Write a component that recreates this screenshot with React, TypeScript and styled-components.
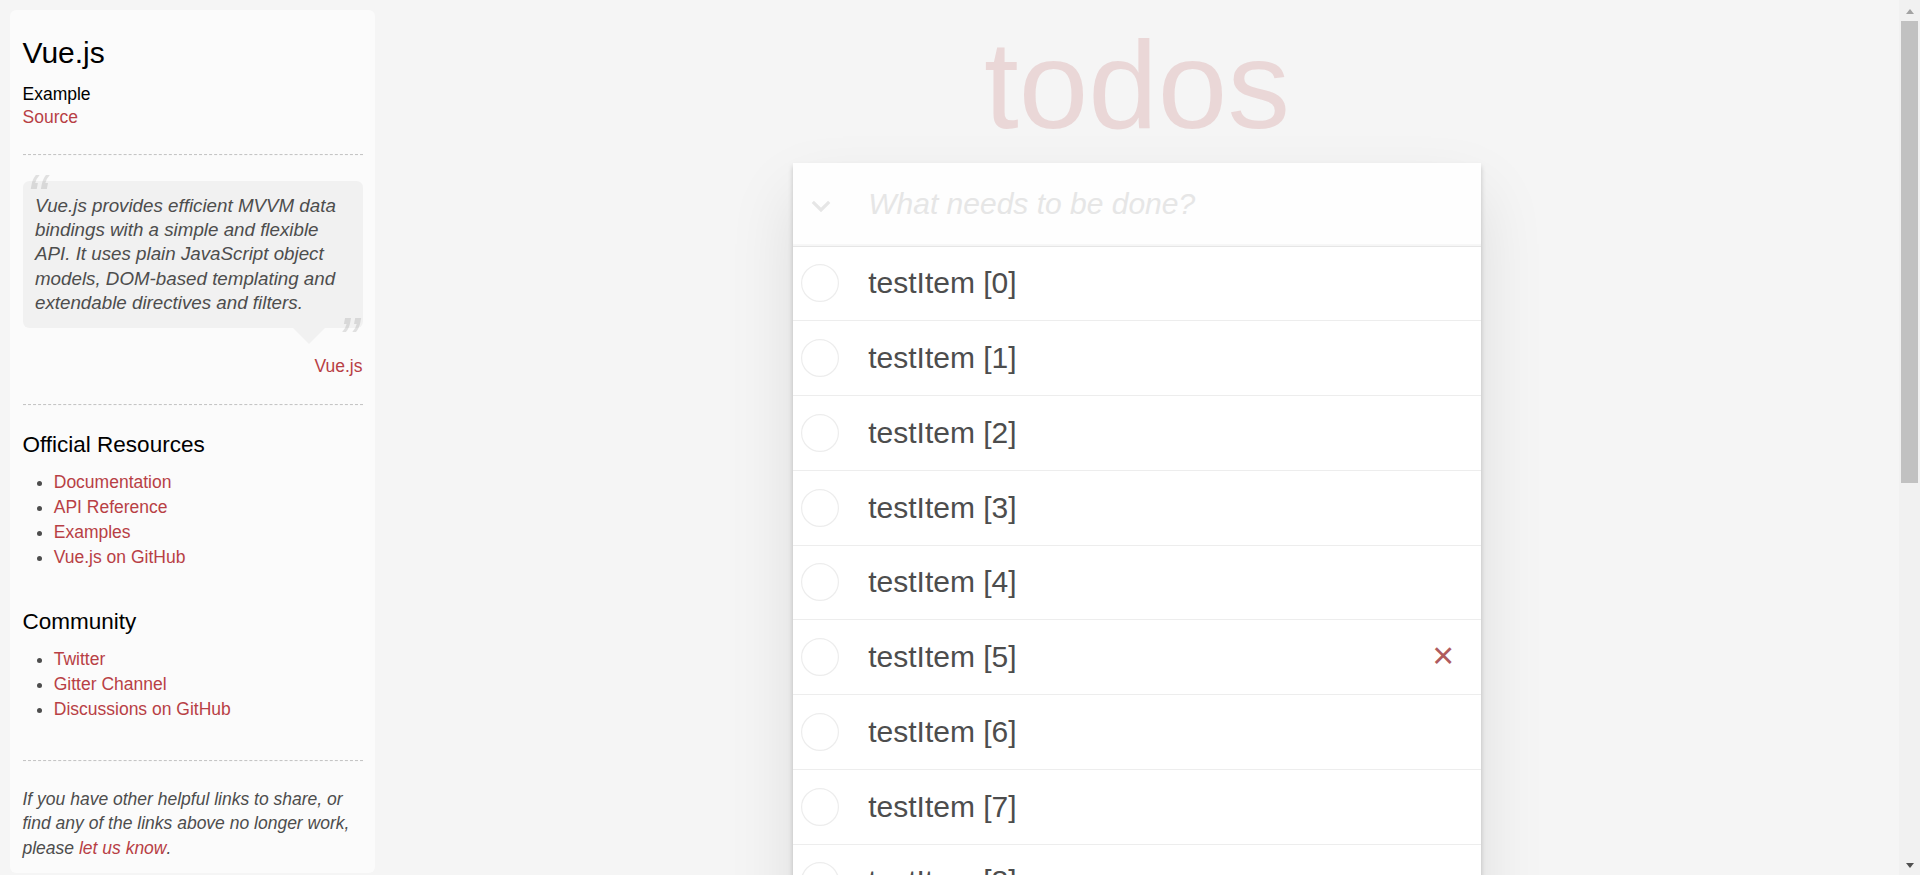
import React from 'react';
import styled, { createGlobalStyle } from 'styled-components';

const GlobalStyle = createGlobalStyle`
  html { scrollbar-width: none; }
  html, body { margin: 0; padding: 0; }
  body {
    background: #f5f5f5;
    color: #4d4d4d;
    font-family: "Liberation Sans", Arial, Helvetica, sans-serif;
    font-size: 17.5px;
    line-height: 24.5px;
    font-weight: 300;
  }
`;

const Page = styled.div`
  position: relative;
  display: flex;
  align-items: flex-start;
  padding-right: 21px;
`;

/* ---------- window scrollbar (browser chrome in the reference) ---------- */

const ScrollBar = styled.div`
  position: absolute;
  top: 0;
  right: 0;
  width: 21px;
  height: 875px;
  display: flex;
  flex-direction: column;
  background: #f1f1f1;
`;

const ScrollArrow = styled.div<{ $dir: 'up' | 'down'; $disabled?: boolean }>`
  flex-shrink: 0;
  height: 21px;
  display: flex;
  align-items: center;
  justify-content: center;
  &::before {
    content: '';
    width: 0;
    height: 0;
    border-left: 4.5px solid transparent;
    border-right: 4.5px solid transparent;
    ${(p) =>
      p.$dir === 'up'
        ? `border-bottom: 5px solid ${p.$disabled ? '#a3a3a3' : '#505050'}; margin-top: 1px;`
        : `border-top: 5px solid ${p.$disabled ? '#a3a3a3' : '#505050'}; margin-top: 1px;`}
  }
`;

const ScrollThumb = styled.div`
  flex-shrink: 0;
  height: 462px;
  margin: 0 2px;
  background: #c1c1c1;
`;

const ScrollSpacer = styled.div`
  flex: 1 1 auto;
`;

/* ---------- sidebar ---------- */

const Sidebar = styled.aside`
  flex-shrink: 0;
  width: 340px;
  padding: 12.5px;
  margin: 10px 0 0 10px;
  border-radius: 6.25px;
  background-color: rgba(255, 255, 255, 0.6);
  color: #4d4d4d;
`;

const SideTitle = styled.h3`
  margin: 12.5px 0;
  font-size: 30px;
  font-weight: 500;
  line-height: 1.2;
  color: #000;
`;

const SourceLinks = styled.div``;

const SubTitle = styled.h5`
  margin: 12.5px 0 0;
  font-size: 17.5px;
  font-weight: 500;
  line-height: 1.2;
  color: #000;
`;

const Link = styled.a`
  font-weight: normal;
  text-decoration: none;
  color: #b83f45;
  &:hover {
    text-decoration: underline;
    color: #787e7e;
  }
`;

const SourceLink = styled(Link)`
  display: block;
`;

const Rule = styled.hr`
  margin: 25px 0;
  height: 0;
  border: 0;
  border-top: 1px dashed #c5c5c5;
  border-bottom: 1px dashed #f7f7f7;
`;

const Quote = styled.blockquote`
  margin: 25px 0 0;
  padding: 0;
  border: none;
`;

const Bubble = styled.div`
  position: relative;
  padding: 12.5px;
  background: rgba(0, 0, 0, 0.04);
  border-radius: 6.25px;
  &::after {
    content: '';
    position: absolute;
    top: 100%;
    right: 37.5px;
    border: 16.25px solid transparent;
    border-top-color: rgba(0, 0, 0, 0.04);
  }
`;

const QuoteText = styled.p`
  margin: 0;
  font-size: 18.75px;
  font-weight: 300;
  line-height: 1.3;
  font-style: italic;
  &::before {
    content: '“';
    font-size: 62.5px;
    opacity: 0.15;
    position: absolute;
    top: -25px;
    left: 3.75px;
  }
  &::after {
    content: '”';
    font-size: 62.5px;
    opacity: 0.15;
    position: absolute;
    bottom: -52.5px;
    right: 3.75px;
  }
`;

const Attribution = styled.footer`
  margin-top: 25px;
  text-align: right;
`;

const AttributionLink = styled(Link)`
  margin-left: 6.25px;
  vertical-align: middle;
`;

const SectionTitle = styled.h4`
  margin: 12.5px 0;
  font-size: 22.5px;
  font-weight: 500;
  line-height: 1.2;
  color: #000;
`;

const LinkList = styled.ul`
  padding: 0;
  margin: 0 0 37.5px 31.25px;
`;

const LinkItem = styled.li`
  line-height: 25px;
`;

const SideFooter = styled.footer``;

const Note = styled.em`
  font-style: italic;
`;

/* ---------- main ---------- */

const Main = styled.main`
  flex: 1 1 auto;
  min-width: 0;
  display: flex;
  justify-content: center;
`;

const Column = styled.section`
  width: 687.5px;
  flex-shrink: 0;
`;

const Title = styled.h1`
  margin: 22px 0 15.5px;
  font-size: 125px;
  line-height: 125px;
  font-weight: 100;
  text-align: center;
  color: rgba(175, 47, 47, 0.15);
  text-rendering: optimizeLegibility;
`;

const TodoApp = styled.div`
  position: relative;
  background: #fff;
  box-shadow: 0 2.5px 5px 0 rgba(0, 0, 0, 0.2), 0 31.25px 62.5px 0 rgba(0, 0, 0, 0.1);
`;

const Header = styled.header`
  display: flex;
  align-items: center;
  background: rgba(0, 0, 0, 0.003);
  box-shadow: inset 0 -2px 1px rgba(0, 0, 0, 0.03);
`;

const ToggleAll = styled.button`
  flex-shrink: 0;
  width: 75px;
  height: 83px;
  display: flex;
  align-items: center;
  padding: 0 0 0 18px;
  margin: 0;
  border: 0;
  background: none;
  cursor: pointer;
  svg { margin-top: 4px; }
`;

const NewTodo = styled.input`
  flex: 1 1 auto;
  min-width: 0;
  box-sizing: border-box;
  height: 83px;
  margin: 0;
  padding: 20px 20px 20px 0;
  border: 0;
  outline: none;
  background: transparent;
  font-family: inherit;
  font-size: 30px;
  font-weight: 300;
  line-height: 42px;
  color: #4d4d4d;
  caret-color: #4d4d4d;
  &::placeholder {
    font-style: italic;
    font-weight: 300;
    color: #e6e6e6;
  }
`;

const List = styled.ul`
  margin: 0;
  padding: 0;
  list-style: none;
  border-top: 1px solid #e6e6e6;
`;

const Destroy = styled.button<{ $active?: boolean }>`
  flex-shrink: 0;
  align-self: flex-start;
  width: 50px;
  height: 50px;
  margin: 10px 12.5px 0 0;
  padding: 0;
  border: 0;
  background: none;
  font-family: inherit;
  font-size: 37.5px;
  line-height: 43px;
  color: ${(p) => (p.$active ? '#af5b5e' : '#cc9a9a')};
  visibility: ${(p) => (p.$active ? 'visible' : 'hidden')};
  cursor: pointer;
  &:hover { color: #af5b5e; }
`;

const Row = styled.li`
  display: flex;
  align-items: center;
  font-size: 30px;
  border-bottom: 1px solid #ededed;
  &:last-child { border-bottom: none; }
  &:hover ${Destroy} { visibility: visible; }
`;

const Toggle = styled.span`
  flex-shrink: 0;
  width: 48.75px;
  padding-left: 7.5px;
  display: flex;
  align-items: center;
`;

const Label = styled.label`
  flex: 1 1 auto;
  min-width: 0;
  padding: 18.75px 12.5px 18.75px 18.75px;
  line-height: 36.25px;
  word-break: break-all;
  color: #4d4d4d;
`;

const TodoFooter = styled.footer`
  position: relative;
  display: grid;
  grid-template-columns: 1fr auto 1fr;
  align-items: center;
  height: 25px;
  padding: 12.5px 18.75px;
  color: #777;
  border-top: 1px solid #e6e6e6;
  &::before {
    content: '';
    position: absolute;
    right: 0;
    bottom: 0;
    left: 0;
    height: 62.5px;
    overflow: hidden;
    pointer-events: none;
    box-shadow: 0 1px 1px rgba(0, 0, 0, 0.2), 0 10px 0 -3.75px #f6f6f6,
      0 11px 1px -3.75px rgba(0, 0, 0, 0.2), 0 20px 0 -7.5px #f6f6f6,
      0 21px 2px -7.5px rgba(0, 0, 0, 0.2);
  }
`;

const Count = styled.span`
  text-align: left;
  strong { font-weight: 300; }
`;

const Filters = styled.ul`
  margin: 0;
  padding: 0;
  list-style: none;
  display: flex;
`;

const Filter = styled.a<{ $selected?: boolean }>`
  color: inherit;
  margin: 3.75px;
  padding: 3.75px 8.75px;
  text-decoration: none;
  border: 1px solid ${(p) => (p.$selected ? 'rgba(175, 47, 47, 0.2)' : 'transparent')};
  border-radius: 3.75px;
  &:hover { border-color: rgba(175, 47, 47, 0.1); }
`;

const Info = styled.footer`
  margin-top: 81.25px;
  color: #bfbfbf;
  font-size: 12.5px;
  text-shadow: 0 1px 0 rgba(255, 255, 255, 0.5);
  text-align: center;
  p { margin: 12.5px 0; line-height: 1; }
  a { color: inherit; text-decoration: none; font-weight: 400; }
`;

const Circle = () => (
  <svg width="38" height="38" viewBox="0 0 38 38">
    <circle cx="19" cy="19" r="18.4" fill="none" stroke="#ededed" strokeWidth="1.2" />
  </svg>
);

const Chevron = () => (
  <svg width="20" height="12" viewBox="0 0 20 12">
    <polyline
      points="1.8,1.8 10,10 18.2,1.8"
      fill="none"
      stroke="#e6e6e6"
      strokeWidth="3.2"
      strokeLinejoin="miter"
    />
  </svg>
);

const todos = Array.from({ length: 15 }, (_, i) => ({ id: i, title: `testItem [${i}]` }));

export default function App() {
  return (
    <>
      <GlobalStyle />
      <Page>
        <Sidebar>
          <header>
            <SideTitle>Vue.js</SideTitle>
            <SourceLinks>
              <SubTitle>Example</SubTitle>
              <SourceLink href="#">Source</SourceLink>
            </SourceLinks>
          </header>
          <Rule />
          <Quote>
            <Bubble>
              <QuoteText>
                Vue.js provides efficient MVVM data bindings with a simple and flexible API. It uses
                plain JavaScript object models, DOM-based templating and extendable directives and
                filters.
              </QuoteText>
            </Bubble>
            <Attribution>
              <AttributionLink href="#">Vue.js</AttributionLink>
            </Attribution>
          </Quote>
          <Rule />
          <SectionTitle>Official Resources</SectionTitle>
          <LinkList>
            <LinkItem><Link href="#">Documentation</Link></LinkItem>
            <LinkItem><Link href="#">API Reference</Link></LinkItem>
            <LinkItem><Link href="#">Examples</Link></LinkItem>
            <LinkItem><Link href="#">Vue.js on GitHub</Link></LinkItem>
          </LinkList>
          <SectionTitle>Community</SectionTitle>
          <LinkList>
            <LinkItem><Link href="#">Twitter</Link></LinkItem>
            <LinkItem><Link href="#">Gitter Channel</Link></LinkItem>
            <LinkItem><Link href="#">Discussions on GitHub</Link></LinkItem>
          </LinkList>
          <SideFooter>
            <Rule />
            <Note>
              If you have other helpful links to share, or find any of the links above no longer
              work, please <Link href="#">let us know</Link>.
            </Note>
          </SideFooter>
        </Sidebar>
        <Main>
          <Column>
            <Title>todos</Title>
            <TodoApp>
              <Header>
                <ToggleAll aria-label="Mark all as complete">
                  <Chevron />
                </ToggleAll>
                <NewTodo autoFocus placeholder="What needs to be done?" />
              </Header>
              <List>
                {todos.map((t) => (
                  <Row key={t.id}>
                    <Toggle>
                      <Circle />
                    </Toggle>
                    <Label>{t.title}</Label>
                    <Destroy $active={t.id === 5}>×</Destroy>
                  </Row>
                ))}
              </List>
              <TodoFooter>
                <Count>
                  <strong>15</strong> items left
                </Count>
                <Filters>
                  <li><Filter href="#/all" $selected>All</Filter></li>
                  <li><Filter href="#/active">Active</Filter></li>
                  <li><Filter href="#/completed">Completed</Filter></li>
                </Filters>
                <span />
              </TodoFooter>
            </TodoApp>
            <Info>
              <p>Double-click to edit a todo</p>
              <p>Written by <a href="#">Evan You</a></p>
              <p>Part of <a href="#">TodoMVC</a></p>
            </Info>
          </Column>
        </Main>
        <ScrollBar aria-hidden="true">
          <ScrollArrow $dir="up" $disabled />
          <ScrollThumb />
          <ScrollSpacer />
          <ScrollArrow $dir="down" />
        </ScrollBar>
      </Page>
    </>
  );
}
